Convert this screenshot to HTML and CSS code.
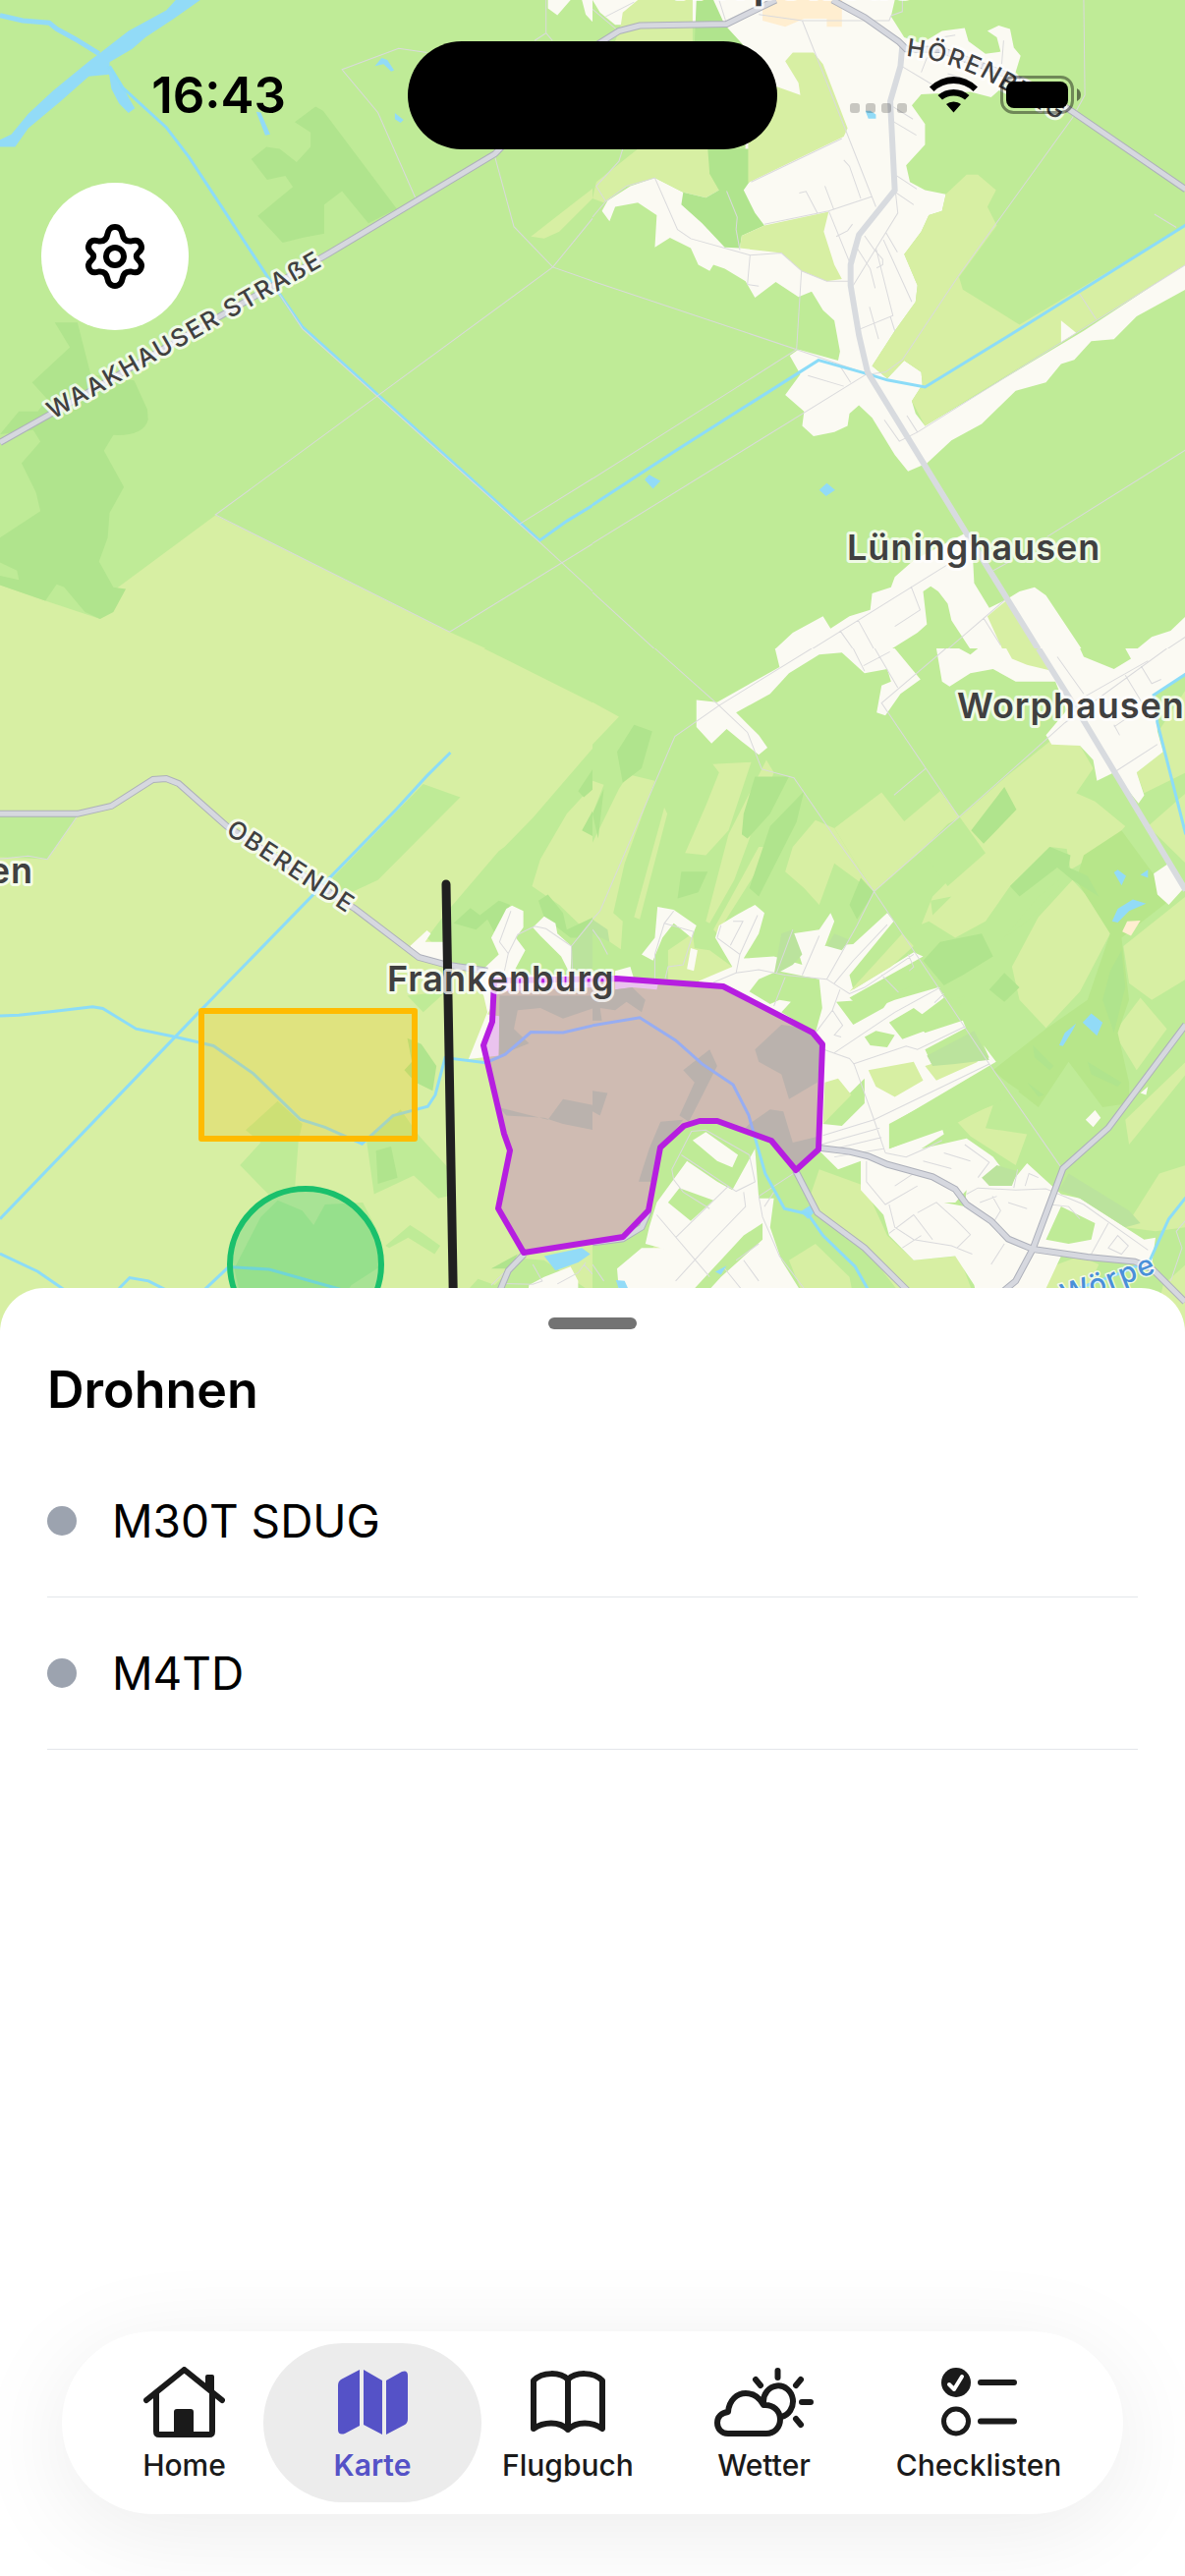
FILE: index.html
```html
<!DOCTYPE html>
<html lang="de">
<head>
<meta charset="utf-8">
<meta name="viewport" content="width=device-width, initial-scale=1">
<title>Karte</title>
<link rel="stylesheet" href="styles.css">
</head>
<body>
<div class="screen">
  <section class="map" aria-label="Karte">
    <svg class="map-canvas" viewBox="0 0 1206 1359" preserveAspectRatio="xMidYMin slice" aria-hidden="true">
      <!-- north-west tile -->
      <svg class="tile" width="603" height="660" viewBox="0 0 1568 1568" preserveAspectRatio="none">
        <rect class="meadow" width="1570" height="1570"/>
        <path class="field" d="M570 1246 1190 1528 1290 1570H0V1415L120 1453 265 1497 310 1422Z"/>
        <path class="field" d="M1570 455 1520 490 1405 572 1440 577 1480 560 1570 478Z"/>
        <path class="forest" d="M145 780H205L240 905 355 920 390 990 392 1015Q380 1055 300 1052L275 1090 328 1178 290 1240 285 1300 262 1358 300 1420 333 1424 300 1480 265 1497 225 1480 170 1420 150 1413 120 1453 0 1415V1300L107 1236 95 1190 57 1120 107 1068 88 1040 0 1050 50 995H100L125 965 85 925 185 840Z"/>
        <path class="forest" d="M780 295 835 258 855 268 1050 505 975 540 905 462 858 495V565L800 575 748 587 682 522 775 452 755 425 707 435 665 385 705 355 740 360 785 392 822 355V320Z"/>
        <path class="meadow" d="M0 1360 45 1380 50 1402 0 1392Z"/>
        <path class="town" d="M1450 0H1510L1475 37 1450 20ZM1540 0H1570V55L1550 35Z"/>
        <path class="water" d="M465 0H530L460 45 385 90 350 118 290 150V180L235 185 160 245 75 310 40 355H0V338L30 325 75 275 140 220 240 145 262 130 340 75 440 25Z"/>
        <path class="water" d="M285 160 320 200 340 235 357 262 340 273 315 250 295 215ZM992 160 1010 140 1025 145 1043 170 1035 173 1015 155ZM1045 273 1068 290 1060 297 1045 288ZM678 270 690 272 715 325 702 327Z"/>
        <path class="creek" d="M0 37 60 50 130 55 150 70 200 95 262 130"/>
        <path class="river" d="M290 160 325 212 440 308 500 380 565 470 705 665 800 790 1428 1307 1500 1260 1570 1221"/>
        <path class="lane" d="M740 712 800 795 1428 1311 1570 1431M1130 127 1055 117 905 168 1000 272 1100 480M1310 380 1360 548 1463 646 1570 680M1463 646 1570 526M1463 646 570 1245 1190 1528 1570 1314M1375 1267 1570 1156M1445 0V80L1415 98M1445 80 1462 98"/>
        <path class="road-case" d="M0 1070 130 1003 870 613 1310 372 1600 95"/>
        <path class="road" d="M0 1070 130 1003 870 613 1310 372 1600 95"/>
      </svg>

      <!-- north-east tile -->
      <svg class="tile" x="603" width="603" height="660" viewBox="0 0 1568 1568" preserveAspectRatio="none">
        <rect class="meadow" width="1568" height="1570"/>
        <path class="town" d="M0 0H800L790 40 825 90 870 105 925 75 985 68 995 100 1040 130 1080 125 1070 90 1045 75 1075 62 1105 70 1115 115 1133 135 1118 180 1080 215 1055 235 1000 222 870 228 845 255 880 300V350L830 400 840 440 880 460 935 470 925 510 890 520 870 560 825 615 860 690 855 730 800 800 740 885 780 915 825 872 870 900 873 930 845 970 855 1000 880 1030 1300 800 1570 638V700L1440 765 1380 820 1320 825 1275 870 1240 880 1200 925 1120 945 1030 1025 950 1065 885 1120 835 1140 800 1100 740 1010 705 980 680 1000 675 1030 640 1045 585 1055 555 1030 560 995 510 955 550 905 522 860 545 845 650 872 655 850 640 775 610 750 580 705 545 718 485 682 430 720 405 680 350 650 320 640 310 655 280 640 260 600 205 575 165 598 170 520 120 490 60 500 45 535 25 510 40 485 100 450 165 430 240 465 400 455 412 200 360 100 275 60 60 60 20 30Z"/>
        <path class="field" d="M75 60 80 30 120 0H265V100H60ZM0 480 10 440 120 360H310V420L335 460 300 478 240 465 165 430 90 450 30 490Z"/>
        <path class="forest" d="M275 0H320L350 60 400 110H270ZM305 360H415V440L400 460 430 515 455 545 395 570 390 600 350 598 290 540 235 495 240 465 300 478 335 460 310 420Z"/>
        <path class="field" d="M510 148 530 127H585L610 155 675 310 665 330 412 442V200L490 210 550 230 545 200ZM395 570 455 545 625 512 612 560 640 640 660 675 620 680 553 655 500 612 390 600Z"/>
        <path class="field" d="M935 470 990 422H1020L1068 460 1045 500 1070 545 970 670 980 700 1130 785 1570 545V640L880 1030 845 970 873 930 870 900 825 872 780 915 740 885 800 800 855 730 860 690 825 615 870 560 890 520 925 510Z"/>
        <path class="town" d="M1240 775 1280 805 1240 828Z"/>
        <path class="sand" d="M450 20 480 0H660V65H620V45L560 45 510 65 450 50Z"/>
        <path class="town" d="M483 1570 530 1530 610 1490 630 1520 680 1490 735 1475 740 1435 790 1420 800 1395 850 1355 985 1290 1005 1320 1010 1410 1050 1470 1095 1450 1130 1430 1170 1420 1200 1440 1295 1570ZM1440 1570 1480 1540 1530 1525 1570 1490V1570Z"/>
        <path class="meadow" d="M875 1430 895 1418 915 1430 940 1460 950 1500 1000 1570H790L860 1530 885 1510Z"/>
        <path class="field" d="M1045 1490 1095 1452 1180 1570H1085Z"/>
        <path class="water" d="M138 1160 150 1148 180 1163 160 1182ZM600 1185 620 1168 642 1185 618 1200ZM722 268H735L750 277V287H730Z"/>
        <path class="lane" d="M0 680 540 845 0 1158M0 1314 725 905M540 845 553 655 500 612 417 617 260 577 225 555 165 430 90 450 35 487 10 450 70 390 80 360M553 655 620 680H683M540 845 730 905 775 900 820 870 970 665 1270 285 1303 230 1300 0M0 525 35 487M417 617 410 688 440 692M355 462 383 525 380 555 390 605M420 440 660 335M555 50 668 310 750 500M355 58 335 0M440 35 555 50H785L790 38 820 28V0M0 22 65 72M35 40 110 5M455 542 625 510 740 475M625 510 683 640M665 387 680 402 710 480M615 450 638 505M547 467 565 463 595 515M645 572 675 558 688 542M690 690 808 515 802 465 850 495M805 425 858 457M720 570 745 603 768 627V640L752 648M700 600 735 650 748 697M770 580 845 730M750 600 795 763 710 795M788 765 800 800M733 742 757 820M777 563 807 610M798 295 857 327M790 255 848 288M818 160 900 205M870 175 885 140 945 130 925 90 960 85M940 178 990 192M1088 98 1083 155M598 870 655 885 683 925M570 908 665 934M772 1015 812 1067 860 1045 1570 640M832 1005 860 1045M1285 705 1333 772M1487 518 1545 550M1570 1088 1203 1298M580 1570 940 1365M843 1418 867 1475 800 1515M703 1500 745 1570M655 1525 690 1570M1060 1380 1110 1355M1095 1448 940 1570M1035 1495 1080 1560M0 1432 165 1570M1520 1570 1570 1540"/>
        <path class="river" d="M0 1221 225 1087 598 871 730 905 780 919 880 936 1110 807 1570 544"/>
        <path class="road-soft" d="M820 110 815 160 788 245 800 460 705 568 683 640V690L705 810 728 900 990 1290 1180 1570"/>
        <path class="road-case" d="M0 115 70 75 125 62 355 58 440 20 485 0M635 0 720 42 810 100 830 118 920 120 1050 165 1150 200 1270 270 1570 458"/>
        <path class="road" d="M0 115 70 75 125 62 355 58 440 20 485 0M635 0 720 42 810 100 830 118 920 120 1050 165 1150 200 1270 270 1570 458"/>
      </svg>

      <!-- south-west tile -->
      <svg class="tile" y="660" width="603" height="699" viewBox="0 0 1568 1661" preserveAspectRatio="none">
        <rect class="field" width="1570" height="1661"/>
        <path class="meadow" d="M1280 0H1570V132ZM0 405H205L125 510 0 505ZM1120 328 1218 360 1000 560 930 590 890 595 880 555Z"/>
        <path class="meadow" d="M1570 240 1410 410 1335 480 1320 490 1180 640 1130 700 1200 760 1300 780 1570 820V700L1480 620 1408 575 1430 510 1500 400 1570 330Z"/>
        <path class="forest" d="M1200 665 1245 628 1270 645 1320 610 1350 620 1310 690 1290 655 1260 680ZM1425 610 1450 595 1490 640 1500 680 1570 650V700H1510L1440 650ZM1570 290 1530 345 1545 360 1570 340ZM1570 390 1540 440 1570 455Z"/>
        <path class="park" d="M1510 720 1570 650V800H1510Z"/>
        <path class="meadow" d="M1078 840 1180 830 1120 880ZM650 1165 735 1095 800 1150 790 1190 780 1310 710 1320 635 1250 690 1195ZM970 1190 1060 1115 1110 1180 1185 1255V1325L1160 1330 1095 1275 990 1320ZM1020 1445 1085 1395 1120 1415 1165 1445 1150 1465 1080 1425 1030 1450ZM1230 1560 1265 1525 1310 1540 1380 1475 1440 1480 1570 1560V1661H1230Z"/>
        <path class="forest" d="M1078 943 1115 957 1155 1010 1145 1070 1100 1050 1070 1020 1090 1000ZM995 1215 1035 1205 1052 1280 1000 1295ZM1300 1500 1370 1465 1350 1500Z"/>
        <path class="meadow" d="M620 1500 690 1375 735 1335 800 1360 830 1395 860 1345 960 1340 1000 1410 1015 1490 930 1540 900 1580 780 1600 640 1580Z"/>
        <path class="town" d="M1085 720 1130 682 1140 690 1125 710 1185 710 1190 760 1110 750ZM1340 630 1355 622 1385 635V675L1365 700 1390 730 1355 790 1570 790V820L1320 830 1290 885 1325 890 1320 985 1240 993 1290 880 1280 840 1250 800 1320 740 1300 700ZM1410 675 1440 648 1470 665 1475 690 1512 720 1510 790 1485 745 1430 695ZM1400 1540 1440 1520 1510 1495 1530 1530V1661H1380Z"/>
        <path class="park" d="M1322 840 1570 840V870L1490 895 1430 870 1370 875 1360 920 1400 955 1320 985ZM1320 1110 1450 1140 1490 1090 1570 1105V1165L1490 1150 1440 1135 1340 1130Z"/>
        <path class="water" d="M1440 1470 1540 1450 1562 1465 1530 1485 1470 1505Z"/>
        <path class="lane" d="M205 405 125 510 75 502 0 509M1352 635 1322 710 1345 738 1335 780M1345 738 1370 692 1415 672 1445 678 1512 720 1515 790M1512 720 1570 655M1300 1540 1385 1465M1330 1536 1410 1538 1435 1530 1410 1490M1475 1537 1530 1510 1550 1485M1545 1490 1570 1515"/>
        <path class="river" d="M1192 252 1130 308 1050 388 540 867 0 1380M0 889 50 887 140 878 245 867 272 871 360 920 465 940 565 961 670 1028 795 1139 860 1158 958 1198 1040 1130 1132 1108 1152 1080 1178 990 1285 1002 1337 982 1405 928 1490 929 1570 912M0 1464 100 1507 200 1570M315 1548 343 1522 393 1530 440 1552M540 1552 605 1496 712 1502 900 1550"/>
        <path class="road-case" d="M0 400H205L295 381 405 317 440 315 473 327 600 430 940 630 1108 747 1180 765 1290 780M1320 1560 1345 1505 1387 1465"/>
        <path class="road" d="M0 400H205L295 381 405 317 440 315 473 327 600 430 940 630 1108 747 1180 765 1290 780M1320 1560 1345 1505 1387 1465"/>
      </svg>

      <!-- south-east tile -->
      <svg class="tile" x="603" y="660" width="603" height="699" viewBox="0 0 1568 1661" preserveAspectRatio="none">
        <rect class="meadow" width="1570" height="1661"/>
        <path class="field" d="M0 130 70 165 0 232ZM0 470 70 340 95 305 165 320 85 520 55 640 80 660 75 728 30 700 0 690ZM190 385 198 400 125 655 110 650ZM318 280 420 275 360 440 300 500 245 495 300 380 335 300ZM360 450 460 270 480 300 375 560 310 665 300 660ZM475 480 330 690 320 680 440 480ZM0 320 30 330 0 400ZM530 480 590 415 640 435 745 590 700 560 640 520 600 620 560 580 510 540Z"/>
        <path class="field" d="M640 435 765 348 825 418 920 345 972 408 1095 310 1210 225 1290 235 1325 290 1280 350 1330 370 1410 430 1350 490 1265 535 1255 485 1210 480 1105 575 1040 660 960 700 860 745 850 715 900 600 960 545 870 490 745 590Z"/>
        <path class="meadow" d="M870 490 940 425 972 408 1040 495 940 575ZM1090 700 1180 600 1235 560 1240 570 1150 660 1060 720ZM895 610 950 600 900 645ZM810 690 890 660 960 700 880 760Z"/>
        <path class="field" d="M1110 770 1180 650 1270 560 1310 600 1370 690 1290 830 1200 918 1130 850ZM1405 720 1570 600V800L1480 850 1420 810ZM1380 930 1450 845 1520 920 1440 1020ZM1570 100 1498 200 1510 250 1440 300 1460 350 1570 300ZM1470 430 1570 350V520Z"/>
        <path class="field" d="M615 1060 680 1035 685 1080 655 1120 610 1150ZM960 1140 1060 1105 1040 1160 1150 1175 1120 1250 1000 1180ZM570 1340 600 1260 720 1300 780 1420 850 1480 970 1470 1010 1568 1040 1661H900L720 1450ZM1410 1400 1500 1270 1570 1250V1400L1490 1410ZM1200 1500 1290 1470 1340 1490 1300 1568H1190ZM1510 1540 1570 1490V1661H1480ZM1410 1140 1570 1000V1030L1420 1200ZM520 1480 590 1440 680 1520 710 1661H600ZM100 1500 170 1440 220 1400 280 1440 260 1520 200 1500 140 1568Z"/>
        <path class="wood" d="M1300 500 1400 440 1480 540 1540 600 1400 700 1420 850 1390 930 1420 1050 1420 1100 1350 1110 1260 1000 1180 1110 1110 1060 1060 1020 1200 920 1310 850 1370 690 1280 560Z"/>
        <path class="forest" d="M65 250 110 185 158 200 130 290 80 325ZM400 400 430 310 520 310 470 400 410 460 395 450ZM470 430 560 345 540 420 440 600 415 580ZM0 400 30 340 15 460ZM1002 440 1090 335 1122 390 1035 472ZM1105 575 1210 480 1265 500 1260 530 1310 550 1340 600 1270 560 1230 530 1130 600ZM235 540 305 540 280 590 225 605ZM680 620 710 555 745 590 700 655ZM875 755 920 710 1030 690 1060 745 980 790 930 815ZM1050 825 1090 785 1130 820 1090 855ZM1370 780 1400 730 1410 820 1380 930 1350 850ZM1165 960 1220 1010 1210 1020 1170 990ZM1310 1000 1400 1050 1390 1060 1320 1030ZM1150 1050 1195 1080 1180 1085Z"/>
        <path class="town" d="M483 0 495 45 330 130 275 125V190L315 230 355 195 395 225 440 257 463 240 440 210 380 155 470 110 520 60 600 15 660 10 720 60 780 50 790 80 765 90 752 155 775 162 815 110 868 75 800 0ZM910 0 925 80 945 92 1000 60 1060 50 1120 80 1225 80 1255 150 1200 210 1215 232 1290 235 1325 270 1335 320 1380 300 1445 375 1460 355 1440 300 1510 250 1495 200 1490 110 1570 60V0Z"/>
        <path class="field" d="M1095 0H1180L1220 55 1150 40 1110 25ZM200 730 265 690 270 725 310 730 370 770 300 805 200 800Z"/>
        <path class="meadow" d="M1290 0H1410L1425 25 1380 50 1340 35 1300 20ZM970 0H1020L1000 15Z"/>
        <path class="town" d="M130 740 165 700 172 625 215 632 275 670 262 700 215 665 185 700 160 755ZM250 775 260 725 278 730 268 780ZM60 780 100 770 110 800H60ZM325 700 335 670 380 645 430 620 455 640 440 690 400 750 480 745 555 765 530 690 600 680 630 640 640 660 615 720 690 715 780 640 797 660 680 790 690 825 850 735 875 745 680 845 720 880 800 850 915 820 930 845 850 900 880 930 980 900 988 918 880 970 900 1010 1050 990 1035 960 1068 1000 790 1150 785 1210 925 1160 930 1175 870 1210 990 1185 1060 1230 1110 1290 1150 1245 1180 1270 1240 1320 1290 1330 1460 1430 1490 1425 1480 1490 1240 1470 1190 1568 1150 1661H1040L1010 1540 960 1470 850 1480 785 1420 770 1370 710 1310V1240L650 1260 600 1215 608 957 583 928 346 818 280 805 370 770Z"/>
        <path class="meadow" d="M415 830 440 800 490 780 600 800 608 870 590 930 500 880 525 855 495 850 470 860ZM645 855 720 850 750 815 800 830 770 870 690 910ZM785 905 850 870 880 890 915 860 985 840 960 890 880 925 820 945ZM720 940 750 925 800 935 780 965 735 960ZM785 1150 1050 1020 1130 1070 1000 1130 940 1160 785 1210ZM610 1150 660 1095 720 1040 720 1100 660 1155ZM800 835 860 810 870 825 820 840ZM960 1340 990 1310 985 1350 930 1340ZM1200 1430 1240 1350 1330 1390 1320 1430 1260 1440Z"/>
        <path class="field" d="M730 1020 850 1000 875 1045 800 1085 750 1060ZM615 1050 650 1040 685 1080 610 1150ZM680 830 820 690 850 720 790 770ZM880 1010 985 980 1020 1000 910 1045Z"/>
        <path class="park" d="M480 790 500 690 530 680 555 740 530 765ZM620 720 640 690 680 705 660 730ZM885 985 1010 925 1050 995 960 1005 900 1010ZM1030 1280 1070 1250 1125 1265 1110 1300 1050 1300ZM1235 1310 1260 1270 1420 1360 1450 1390 1410 1400 1290 1330ZM0 690V655L40 680 45 710ZM200 1340 230 1305 320 1330 260 1385Z"/>
        <path class="field" d="M0 800 62 799 346 818 583 928 609 957 598 1212 537 1262 473 1190 330 1143 283 1142 241 1154 180 1208 149 1360 80 1424 0 1437Z"/>
        <path class="town" d="M60 800 175 806 170 825 105 820 60 825Z"/>
        <path class="park" d="M0 835 60 825 105 820 140 850 130 880 90 855 60 875 20 870 25 900H0ZM430 970 500 910 560 918 590 930 608 960 595 1050 520 1090 500 1030 440 1000ZM240 1020 310 970 330 1010 280 1100 255 1145 230 1130 250 1090 270 1050ZM415 1150 470 1115 505 1120 530 1195 600 1180V1215L537 1262 473 1190 400 1165ZM122 1290 150 1210 180 1145 240 1140 180 1208 160 1290ZM0 1070 40 1075 20 1130 0 1120Z"/>
        <path class="town" d="M265 1190 300 1170 385 1225 370 1255 330 1240ZM150 1400 170 1340 250 1240 330 1290 370 1310 430 1210 440 1330 480 1330 470 1400 500 1480 560 1568V1661H80L65 1500 130 1450 180 1450 220 1460 140 1440Z"/>
        <path class="meadow" d="M200 1340 230 1305 320 1335 260 1385ZM250 1568 400 1420 450 1390 450 1430 340 1520 280 1580Z"/>
        <path class="water" d="M1380 542 1390 535 1412 550 1400 573ZM1450 548 1470 535V555ZM1375 660 1390 630 1430 607 1465 617 1420 635 1390 663ZM1297 905 1320 883 1350 905 1335 937ZM1235 960 1250 930 1280 907 1270 925 1245 962ZM550 1362 580 1345 588 1362 570 1380ZM325 1508 355 1493 340 1515ZM62 1528 85 1530 95 1550H70Z"/>
        <path class="sand" d="M1402 685 1415 660 1450 658 1425 695Z"/>
        <path class="town" d="M1485 545 1525 520 1570 575 1525 620 1495 595ZM1305 1140 1330 1117 1345 1135 1325 1158ZM1450 1075 1470 1060 1465 1080Z"/>
        <path class="lane" d="M165 0 335 138 410 203 448 292 533 313 640 455 745 588 915 820 1050 1005 1240 1255M335 138 580 0M335 138 218 213 130 400 20 635 0 655M745 588 970 408 1250 180 1520 0M970 408 882 290 765 132 935 0M882 290 798 355M690 0 720 55M747 0 808 95M717 42 787 8M745 588 700 670 620 800M780 668 690 755 640 810M850 740 720 820 680 835 620 800 510 790 440 777 380 785 320 808M165 800V740L190 665 215 635M190 665 268 685 240 765 200 770 192 800M330 700 390 740 437 645M330 700 340 670M365 718 398 660 372 660M380 785 390 740M487 785 530 680M555 790 600 695M510 795 480 865M655 825 635 875 590 930M635 875 662 912 640 935 658 940M640 978 800 880 920 820M690 1005 830 962 860 970 985 915M612 970 680 992 692 1005 745 1140 775 1220M610 1178 745 1140 1050 1005M605 1200 760 1160M620 1215 765 1183M640 1230 770 1210M835 740 850 770 838 780M765 790 810 832M930 835 905 857M775 1220 830 1230 880 1210 925 1190M725 1240V1290L775 1345 860 1300M875 1240 950 1258M930 1220 1000 1240M985 1200 1050 1243 1020 1280M850 1270 800 1300M860 1365 910 1340 965 1385 1000 1418 965 1450M785 1415 850 1370 900 1430M785 1345 800 1400 850 1430 950 1445 1005 1465M820 1450 870 1420M1025 1340 1070 1325M1058 1325 1080 1360 1060 1390M1115 1305 1125 1260M1145 1300 1155 1270 1180 1280M1055 1490 1090 1440M1100 1340 1150 1355M990 1320 1020 1305 1120 1310 1200 1307 1300 1345 1470 1455M1210 1345 1260 1350 1290 1380M1320 1465 1365 1390M1365 1450 1390 1420 1418 1445 1400 1465ZM440 1325 540 1265M415 1225 300 1165 262 1168 210 1260 215 1285 240 1315 310 1355M235 1225 380 1313 430 1290 415 1225M400 1315 405 1350 310 1440 220 1530M360 1300 220 1425M170 1370 310 1520M440 1325 450 1375 495 1470 560 1548M455 1350 480 1315M400 1480 440 1530M350 1500 410 1568M380 1480 440 1440M0 680 20 705 40 740M0 1490 30 1530M1568 1385 1545 1410 1560 1450 1530 1530M1230 20 1300 110M1300 118 1470 30M1410 65 1480 170M1385 297 1495 232M1380 185 1395 210M1380 190 1420 165M1450 40 1480 85 1505 75"/>
        <path class="river" d="M0 912 125 893 220 948 290 1005 372 1055 413 1128 457 1270 508 1355 570 1368 610 1420 695 1495 740 1568M1570 62 1485 113 1495 180 1570 450M1570 1328 1525 1380 1475 1480 1400 1510 1250 1560"/>
        <path class="road-soft" d="M1180 0 1300 175 1570 585"/>
        <path class="road-case" d="M600 1208 680 1217 730 1228 780 1248 900 1278 960 1308 990 1345 1055 1385 1100 1428 1165 1453 1310 1472 1435 1483 1480 1500 1568 1580M537 1262 595 1365 720 1450 850 1568M1570 910 1365 1160 1245 1258 1165 1453 1120 1530 1070 1568M0 1437 80 1428 130 1400 149 1360"/>
        <path class="road" d="M600 1208 680 1217 730 1228 780 1248 900 1278 960 1308 990 1345 1055 1385 1100 1428 1165 1453 1310 1472 1435 1483 1480 1500 1568 1580M537 1262 595 1365 720 1450 850 1568M1570 910 1365 1160 1245 1258 1165 1453 1120 1530 1070 1568M0 1437 80 1428 130 1400 149 1360"/>
      </svg>

      <!-- flight zones -->
      <rect class="zone-amber" x="205" y="1029" width="217" height="130"/>
      <circle class="zone-green" cx="311" cy="1287" r="77"/>
      <path class="zone-violet" d="M503 998 501 1040 492 1064 513 1154 519 1171 507 1230 533 1275 634 1259 660 1232 672 1168 696 1146 712 1141H730L785 1161 810 1191 833 1170 837 1063 827 1051 736 1004 627 996Z"/>
      <path class="zone-line" d="M454 900 462 1359"/>

      <!-- labels -->
      <path id="p-waak" class="guide" d="M54 427 394 233"/>
      <path id="p-ober" class="guide" d="M229 848 430 980"/>
      <path id="p-hoer" class="guide" d="M922 57Q960 60 1005 82L1120 146"/>
      <path id="p-woer" class="guide" d="M1083 1328 1122 1316 1200 1286"/>
      <text class="street"><textPath href="#p-waak">WAAKHAUSER STRAẞE</textPath></text>
      <text class="street"><textPath href="#p-ober">OBERENDE</textPath></text>
      <text class="street"><textPath href="#p-hoer">HÖRENBERG</textPath></text>
      <text class="stream"><textPath href="#p-woer">Wörpe</textPath></text>
      <text class="place" x="862" y="570">Lüninghausen</text>
      <text class="place" x="974" y="731">Worphausen</text>
      <text class="place" x="394" y="1009">Frankenburg</text>
      <text class="place" x="34" y="899" text-anchor="end">en</text>
      <text class="place place-large" x="680" y="-2">Worpswede</text>
    </svg>

    <header class="status">
      <time class="clock">16:43</time>
      <div class="island"></div>
      <svg class="status-icons" width="235" height="40" viewBox="0 0 235 40" aria-hidden="true">
        <g opacity=".2"><rect y="28" width="10" height="10" rx="3"/><rect x="16" y="28" width="10" height="10" rx="3"/><rect x="32" y="28" width="10" height="10" rx="3"/><rect x="48" y="28" width="10" height="10" rx="3"/></g>
        <path d="M81 11.500Q92 1 105.500 1T130 11.500L125.500 16Q117 8 105.500 8T85.500 16ZM89.500 20Q96 14 105.500 14T121.500 20L117 24.500Q112 20.500 105.500 20.500T94 24.500ZM98 29Q101 26.500 105.500 26.500T113 29L105.500 37.500Z"/>
        <rect x="154.500" y="1.500" width="72" height="36" rx="12" fill="none" stroke="#000" stroke-opacity=".42" stroke-width="3"/>
        <rect x="159" y="6" width="63" height="27" rx="8"/>
        <path d="M231 13Q235 15 235 19.500T231 26Z" opacity=".5"/>
      </svg>
    </header>
    <button class="settings" type="button" aria-label="Einstellungen">
      <svg width="60" height="66" viewBox="0 0 60 66" fill="none" stroke="#000" stroke-width="6" stroke-linejoin="round" aria-hidden="true">
        <path d="M30 3C25 3 23 7 22.500 10 21.500 16 18 18 13.500 17.500 9 16 5.500 17 4 20 2 24 3.500 27 6 29 9 31.500 9 34.500 6 37 3.500 39 2 42 4 46 5.500 49 9 50 13.500 48.500 18 48 21.500 50 22.500 56 23 59 25 63 30 63S37 59 37.500 56C38.500 50 42 48 46.500 48.500 51 50 54.500 49 56 46 58 42 56.500 39 54 37 51 34.500 51 31.500 54 29 56.500 27 58 24 56 20 54.500 17 51 16 46.500 17.500 42 18 38.500 16 37.500 10 37 7 35 3 30 3Z"/>
        <circle cx="30" cy="33" r="9"/>
      </svg>
    </button>
  </section>

  <main class="sheet">
    <div class="grabber"></div>
    <div class="drones">
      <h1>Drohnen</h1>
      <ul>
        <li><span class="dot"></span>M30T SDUG</li>
        <li><span class="dot"></span>M4TD</li>
      </ul>
    </div>

    <nav class="tabs" aria-label="Hauptnavigation">
      <a class="tab" href="#home">
        <span class="icon"><svg width="83" height="72" viewBox="0 0 83 72" fill="none" stroke="currentColor" stroke-width="6" stroke-linecap="round" stroke-linejoin="round"><path d="M3 34 41.500 3 80 34M13 27V66Q13 69 16 69H67Q70 69 70 66V27"/><path d="M31 69V46Q31 43 34 43H48Q51 43 51 46V69ZM63 21V10Q63 8 65 8H70Q72 8 72 10V28Z" fill="currentColor" stroke="none"/></svg></span>
        Home
      </a>
      <a class="tab active" href="#karte" aria-current="page">
        <span class="icon"><svg width="71" height="66" viewBox="0 0 71 66" fill="currentColor"><path d="M22 0V57L7 65Q0 67 0 61V16Q0 12 3 10ZM26 0 45 11V66L26 56ZM49 11 65 2Q71 0 71 6V50Q71 54 68 56L49 66Z"/></svg></span>
        Karte
      </a>
      <a class="tab" href="#flugbuch">
        <span class="icon"><svg width="76" height="64" viewBox="0 0 76 64" fill="none" stroke="currentColor" stroke-width="6" stroke-linecap="round" stroke-linejoin="round"><path d="M38 9C30 1 12 1 3 10V59C13 52 29 51 38 60 47 51 63 52 73 59V10C64 1 46 1 38 9V60"/></svg></span>
        Flugbuch
      </a>
      <a class="tab" href="#wetter">
        <span class="icon"><svg width="101" height="70" viewBox="0 0 101 70" fill="none" stroke="currentColor" stroke-width="6" stroke-linecap="round" stroke-linejoin="round"><path d="M14 67C7 67 3 62 3 56S7 46 14 45C15 33 23 26 32 26 40 26 46 30 50 38 60 37 67 44 67 52.500S61 67 53 67ZM50 35A15 16 0 1 1 68 50M64.500 3V10M42 12 47 18M88 12 83 18M89 35H98M83 52 88 58"/></svg></span>
        Wetter
      </a>
      <a class="tab" href="#checklisten">
        <span class="icon"><svg width="77" height="70" viewBox="0 0 77 70" fill="none" stroke="currentColor" stroke-width="6" stroke-linecap="round" stroke-linejoin="round"><circle cx="15" cy="15" r="15" fill="currentColor" stroke="none"/><path d="M8 17 13 22 21 9" stroke="#fff" stroke-width="4"/><circle cx="15" cy="54.500" r="12.500" stroke-width="5"/><path d="M40 15H74M40 54.500H74"/></svg></span>
        Checklisten
      </a>
    </nav>
  </main>
</div>
</body>
</html>
```
FILE: styles.css
```css
* { box-sizing: border-box; }

body {
  margin: 0;
  background: #fff;
  color: #000;
  font-family: Inter, "Liberation Sans", sans-serif;
}

.screen {
  display: flex;
  flex-direction: column;
  min-height: 100vh;
}

/* Map */
.map {
  position: relative;
  flex: 1 1 0;
}

/* The map runs on behind the rounded corners of the sheet. */
.map-canvas {
  position: absolute;
  top: 0;
  left: 0;
  width: 100%;
  height: calc(100% + 48px);
}

.tile { overflow: hidden; }
.tile path { vector-effect: non-scaling-stroke; }

.meadow { fill: #bfeb97; }
.field { fill: #d7efa3; }
.forest { fill: #b0e48d; }
.wood { fill: #b7e68a; }
.park { fill: #bbe39d; }
.town { fill: #fbfaf3; }
.sand { fill: #ffeed0; }
.water { fill: #92dbf7; }

.creek, .river, .lane, .road, .road-case, .road-soft, .guide { fill: none; }
.creek { stroke: #92dbf7; stroke-width: 5; }
.river { stroke: #8cdcf8; stroke-width: 3; }
.lane { stroke: #dadadc; stroke-width: 1; }
.road-case { stroke: #adb0ba; stroke-width: 7; }
.road { stroke: #d6d8df; stroke-width: 5; }
.road-soft { stroke: #d8dbdf; stroke-width: 6; }

.zone-amber, .zone-green, .zone-violet, .zone-line { stroke-linejoin: round; stroke-width: 6; }
.zone-amber { fill: rgba(255, 187, 0, .22); stroke: #ffbb00; }
.zone-green { fill: rgba(26, 192, 108, .25); stroke: #1ac06c; }
.zone-violet { fill: rgba(182, 30, 224, .25); stroke: #b61ee0; }
.zone-line { fill: none; stroke: #202020; stroke-width: 9; stroke-linecap: round; }

.place, .street, .stream {
  paint-order: stroke;
  stroke: rgba(255, 255, 255, .75);
  stroke-linejoin: round;
  stroke-width: 6px;
  fill: #404040;
}
.place { font-size: 36px; font-weight: 600; letter-spacing: 1px; }
.place-large { font-size: 42px; }
.street { font-size: 25px; font-weight: 500; letter-spacing: 2px; }
.stream { font-size: 29px; font-weight: 500; letter-spacing: 2px; fill: #4a90d9; stroke-width: 3px; }

/* Status bar */
.status {
  position: relative;
  display: grid;
  grid-template-columns: 1fr auto 1fr;
  align-items: center;
  padding-top: 42px;
}
.clock {
  justify-self: end;
  margin-right: 124px;
  font-size: 51px;
  font-weight: 600;
  line-height: 56px;
}
.island {
  width: 376px;
  height: 110px;
  border-radius: 55px;
  background: #000;
}
.status-icons { margin-left: 74px; }

.settings {
  position: relative;
  display: grid;
  place-items: center;
  width: 150px;
  height: 150px;
  margin: 34px 42px;
  padding: 0;
  border: 0;
  border-radius: 50%;
  background: #fff;
}

/* Sheet */
.sheet {
  position: relative;
  display: flex;
  flex: 1 1 0;
  flex-direction: column;
  border-radius: 45px 45px 0 0;
  background: #fff;
}
.grabber {
  align-self: center;
  width: 90px;
  height: 12px;
  margin-top: 30px;
  border-radius: 6px;
  background: #737373;
}
.drones { padding: 30px 48px; }
.drones h1 {
  margin: 0 0 24px;
  font-size: 52px;
  font-weight: 600;
  line-height: 64px;
}
.drones ul {
  margin: 0;
  padding: 0;
  list-style: none;
}
.drones li {
  display: flex;
  align-items: center;
  gap: 36px;
  height: 155px;
  border-bottom: 1px solid #e3e6ea;
  font-size: 46px;
}
.dot {
  width: 30px;
  height: 30px;
  border-radius: 50%;
  background: #9ca3af;
}

/* Tab bar */
.tabs {
  display: grid;
  grid-template-columns: 161fr 222fr 176fr 223fr 214fr;
  margin: auto 63px 63px;
  padding: 12px 40px 12px 44px;
  border-radius: 93px;
  background: #fff;
  box-shadow: 0 18px 100px rgba(0, 0, 0, .08);
}
.tab {
  display: flex;
  flex-direction: column;
  align-items: center;
  gap: 10px;
  padding: 24px 0 20px;
  border-radius: 81px;
  color: #1a1a1a;
  font-size: 30px;
  font-weight: 500;
  line-height: 36px;
  text-decoration: none;
}
.icon {
  display: grid;
  place-items: center;
  height: 72px;
}
.active {
  background: #ececec;
  color: #5552c7;
  font-weight: 600;
}
```
